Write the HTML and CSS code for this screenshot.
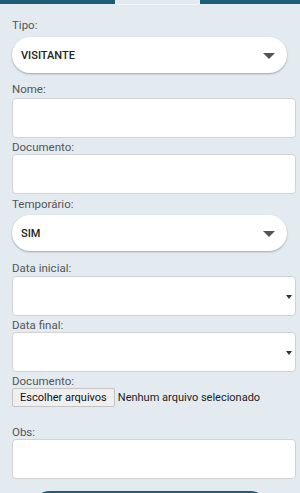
FILE: index.html
```html
<!DOCTYPE html>
<html lang="pt-BR">
<head>
    <meta charset="UTF-8">
    <meta name="viewport" content="width=device-width, initial-scale=1.0">
    <title>Cadastro de acesso</title>
    <link rel="stylesheet" href="styles.css">
</head>
<body>
    <!-- barra superior com aba -->
    <div class="topbar">
        <div class="topbar-left"></div>
        <div class="topbar-tab"></div>
        <div class="topbar-right"></div>
    </div>

    <form class="form">
        <label class="label label-first">Tipo:</label>
        <div class="pill-select">
            <span>VISITANTE</span>
            <svg class="pill-arrow" width="12" height="6" viewBox="0 0 12 6"><path d="M0 0H12L6 6Z"/></svg>
        </div>

        <label class="label label-after-pill">Nome:</label>
        <div class="input"></div>

        <label class="label">Documento:</label>
        <div class="input"></div>

        <label class="label label-temp">Temporário:</label>
        <div class="pill-select pill-second">
            <span>SIM</span>
            <svg class="pill-arrow" width="12" height="6" viewBox="0 0 12 6"><path d="M0 0H12L6 6Z"/></svg>
        </div>

        <label class="label label-after-pill2">Data inicial:</label>
        <div class="input input-date">
            <svg class="date-arrow" width="6" height="4" viewBox="0 0 6 4"><path d="M0 0H6L3 4Z"/></svg>
        </div>

        <label class="label">Data final:</label>
        <div class="input input-date">
            <svg class="date-arrow" width="6" height="4" viewBox="0 0 6 4"><path d="M0 0H6L3 4Z"/></svg>
        </div>

        <label class="label">Documento:</label>
        <div class="file-row">
            <span class="file-btn">Escolher arquivos</span>
            <span class="file-name">Nenhum arquivo selecionado</span>
        </div>

        <label class="label label-obs">Obs:</label>
        <div class="input input-obs"></div>
    </form>

    <div class="submit-btn"></div>
</body>
</html>
```

FILE: styles.css
```css
body {
    font-family: Roboto, 'Liberation Sans', Arial, sans-serif;
    background: #e3ebf0;
    margin: 0;
    padding: 0;
    overflow: hidden;
}

.topbar {
    display: flex;
    height: 4px;
}

.topbar-left {
    width: 115px;
    background: #1c5d78;
}

.topbar-tab {
    width: 85px;
    background: #e3ebf0;
    border-radius: 0 0 6px 6px;
    box-shadow: 0 1px 0 #f4f7f9;
}

.topbar-right {
    flex: 1;
    background: #1c5d78;
}

.form {
    padding: 0 4px 0 12px;
}

.label {
    display: block;
    font-size: 11.5px;
    line-height: 14px;
    color: #555;
    margin-top: 2px;
}

.label-first {
    margin-top: 14px;
}

.label-after-pill {
    margin-top: 9px;
}

.label-temp {
    margin-top: 3px;
}

.label-after-pill2 {
    margin-top: 10px;
}

.label-obs {
    margin-top: 18px;
}

.pill-select {
    display: flex;
    align-items: center;
    justify-content: space-between;
    width: 275px;
    height: 36px;
    margin-top: 5px;
    padding: 0 12px 0 9px;
    box-sizing: border-box;
    background: #fff;
    border-radius: 18px;
    box-shadow: 0 1px 2px rgba(0,0,0,0.3);
    font-size: 11px;
    font-weight: 500;
    color: #222;
}

.pill-second {
    margin-top: 4px;
}

.pill-arrow {
    fill: #555;
    margin-top: 1px;
}

.input {
    height: 40px;
    margin-top: 2px;
    background: #fff;
    border: 1px solid #cfd3d6;
    border-radius: 4px;
    box-sizing: border-box;
}

.label + .input {
    margin-top: 0;
}

.label-after-pill + .input {
    margin-top: 2px;
}

.label-after-pill2 + .input {
    margin-top: 1px;
}

.input-date {
    display: flex;
    align-items: center;
    justify-content: flex-end;
    padding-right: 3px;
}

.date-arrow {
    fill: #333;
    margin-top: 2px;
}

.file-row {
    display: flex;
    align-items: center;
    font-size: 11px;
    color: #222;
}

.file-btn {
    display: inline-block;
    height: 19px;
    line-height: 17px;
    padding: 0 7px;
    box-sizing: border-box;
    background: #efefef;
    border: 1px solid #c4c4c4;
    border-radius: 2px;
    color: #111;
}

.file-name {
    margin-left: 3px;
}

.submit-btn {
    height: 20px;
    margin: 12px 32px 0 32px;
    background: #1c5d78;
    border-radius: 18px 18px 0 0;
}
```
